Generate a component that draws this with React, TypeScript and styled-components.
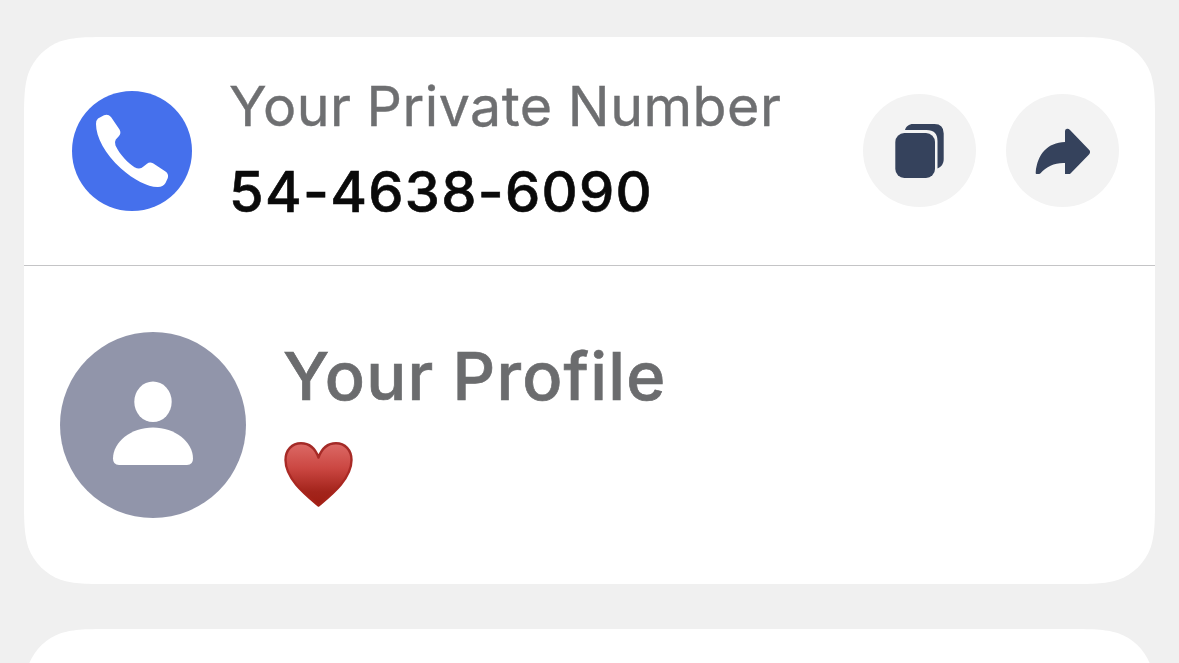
import React from "react";
import styled, { createGlobalStyle } from "styled-components";

const GlobalStyle = createGlobalStyle`
  * { box-sizing: border-box; }
  body { margin: 0; background: #f0f0f0; overflow: hidden; }
`;

/* Continuous-curvature rounded rectangle, as a clip-path outline. */
const squircle = (w: number, h: number, r: number) => {
  const curve: [number, number][] = [
    [1.0885, 0], [0.8684, 0], [0.6314, 0.0749],
    [0.3728, 0.169], [0.169, 0.3728], [0.0749, 0.6314],
    [0, 0.8684], [0, 1.0885], [0, 1.5287],
  ];
  const ext = 1.5287;
  const draw = (pts: [number, number][], fx: boolean, fy: boolean) =>
    "C" +
    pts
      .map(([x, y]) => `${(fx ? w - x * r : x * r).toFixed(2)} ${(fy ? h - y * r : y * r).toFixed(2)}`)
      .join(" ");
  const swapped = curve.map(([x, y]) => [y, x] as [number, number]);
  return [
    `M${ext * r} 0`,
    draw(curve, false, false),
    `L0 ${h - ext * r}`,
    draw(swapped, false, true),
    `L${w - ext * r} ${h}`,
    draw(curve, true, true),
    `L${w} ${ext * r}`,
    draw(swapped, true, false),
    "Z",
  ].join("");
};

const Screen = styled.main`
  width: 1179px;
  height: 663px;
  padding: 37px 24px 0;
  display: flex;
  flex-direction: column;
  gap: 45px;
  overflow: hidden;
  background: #f0f0f0;
  font-family: Inter, "Liberation Sans", sans-serif;
`;

const Card = styled.section<{ $height: number }>`
  flex: none;
  width: 1131px;
  height: ${(p) => p.$height}px;
  background: #fff;
  clip-path: path("${(p) => squircle(1131, p.$height, 58)}");
`;

const NumberRow = styled.div`
  height: 229px;
  padding: 0 36px 0 48px;
  display: flex;
  align-items: center;
  border-bottom: 1px solid #c4c4c6;
`;

const ProfileRow = styled.div`
  height: 318px;
  padding: 0 36px;
  display: flex;
  align-items: center;
`;

const Disc = styled.div<{ $size: number; $color: string }>`
  flex: none;
  width: ${(p) => p.$size}px;
  height: ${(p) => p.$size}px;
  border-radius: 50%;
  background: ${(p) => p.$color};

  svg { display: block; width: 100%; height: 100%; }
`;

const NumberText = styled.div`
  flex: 1;
  margin-left: 37px;
  padding-bottom: 5px;
  display: flex;
  flex-direction: column;
  white-space: nowrap;
`;

const Label = styled.div`
  font-size: 55.5px;
  line-height: 87px;
  letter-spacing: 0.5px;
  word-spacing: -1px;
  -webkit-text-stroke: 0.4px #6e6f71;
  color: #6e6f71;
`;

const PhoneNumber = styled.div`
  font-size: 56px;
  line-height: 87px;
  font-weight: 500;
  letter-spacing: 1.3px;
  -webkit-text-stroke: 0.6px #0a0a0a;
  color: #0a0a0a;
`;

const Actions = styled.div`
  margin-bottom: 1px;
  display: flex;
  gap: 30px;
`;

const ActionButton = styled.button`
  width: 113px;
  height: 113px;
  padding: 0;
  border: 0;
  border-radius: 50%;
  background: #f3f3f3;

  svg { display: block; width: 100%; height: 100%; }
`;

const ProfileText = styled.div`
  margin-left: 37px;
  padding-bottom: 10px;
  display: flex;
  flex-direction: column;
  white-space: nowrap;
`;

const ProfileTitle = styled.div`
  font-size: 66.5px;
  line-height: 88px;
  font-weight: 500;
  letter-spacing: 1.25px;
  word-spacing: -0.8px;
  -webkit-text-stroke: 0.7px #6b6c6e;
  color: #6b6c6e;
`;

const Heart = styled.svg`
  display: block;
  width: 70px;
  height: 68px;
  margin: 20px 0 0 1px;
`;

export default function App() {
  return (
    <>
      <GlobalStyle />
      <Screen>
        <Card $height={547}>
          <NumberRow>
            <Disc $size={120} $color="#4570ec">
              <svg viewBox="72 91 120 120" fill="#fff">
                <path d="M98 118.500L104 115.200Q108 113.500 111 117L119.500 129.500Q121.500 133 119 136L115.800 139.500Q114.200 142 115.500 145.500C120 155 128.500 163.500 134.500 167.200Q140 170 143.500 166.500L147 163.800Q149.500 161.500 153 163.200L165.500 171.500Q169 174 167.800 178L165.500 183Q163 187 158 187C148 187.300 134 180 121 168.500C105 154 96 137 96 124Q95.800 120.500 98 118.500Z" />
              </svg>
            </Disc>
            <NumberText>
              <Label>Your Private Number</Label>
              <PhoneNumber>54-4638-6090</PhoneNumber>
            </NumberText>
            <Actions>
              <ActionButton aria-label="Copy">
                <svg viewBox="863 94 113 113" fill="#35425c">
                  <rect x="895.300" y="133" width="39.700" height="45" rx="9" />
                  <path d="M905 130C906 126.500 909 124 913 124H934.500Q943.700 124 943.700 133.500V159C943.700 163.500 941.500 167 937.500 168.500V141Q937.500 130 926.500 130Z" />
                </svg>
              </ActionButton>
              <ActionButton aria-label="Share">
                <svg viewBox="1006 94 113 113" fill="#35425c">
                  <path d="M1065 142V131Q1065 129 1067 128.700Q1068.700 128.500 1070 130L1089 149.800Q1091.200 152 1089 154.500L1070.500 173.500Q1069.800 174 1069 174H1065V163C1055 162.500 1046.500 166.500 1040.500 173.300Q1040 174 1039 174H1036.500Q1035.500 174 1035.700 172.500C1037.500 154 1047.500 142.500 1065 142Z" />
                </svg>
              </ActionButton>
            </Actions>
          </NumberRow>
          <ProfileRow>
            <Disc $size={186} $color="#9195aa">
              <svg viewBox="60 332 186 186" fill="#fff">
                <ellipse cx="153" cy="401.800" rx="18.700" ry="20.300" />
                <path d="M119 465Q113 465 113 458.500C113 442 131 427.500 153 427.500S193 442 193 458.500Q193 465 187 465Z" />
              </svg>
            </Disc>
            <ProfileText>
              <ProfileTitle>Your Profile</ProfileTitle>
              <Heart viewBox="284 440 70 68">
                <defs>
                  <linearGradient id="heartFill" x1="0" y1="0" x2="0" y2="1">
                    <stop offset="0" stopColor="#dc6a66" />
                    <stop offset="0.4" stopColor="#cb4742" />
                    <stop offset="0.78" stopColor="#a3241b" />
                    <stop offset="1" stopColor="#9e1c12" />
                  </linearGradient>
                  <linearGradient id="heartEdge" x1="0" y1="0" x2="0" y2="1">
                    <stop offset="0" stopColor="#a32a27" />
                    <stop offset="0.5" stopColor="#ac2a25" />
                    <stop offset="1" stopColor="#a32016" />
                  </linearGradient>
                </defs>
                <path
                  d="M318.500 505.500C306 495 285.500 479 285.500 460C285.500 450 292 443.200 301 443.200C309.500 443.200 315.500 449 318.500 457.500C321.500 449 327.500 443.200 336 443.200C345 443.200 351.500 450 351.500 460C351.500 479 331 495 318.500 505.500Z"
                  fill="url(#heartFill)"
                  stroke="url(#heartEdge)"
                  strokeWidth="2.400"
                  strokeLinejoin="round"
                />
              </Heart>
            </ProfileText>
          </ProfileRow>
        </Card>
        <Card $height={300} />
      </Screen>
    </>
  );
}
